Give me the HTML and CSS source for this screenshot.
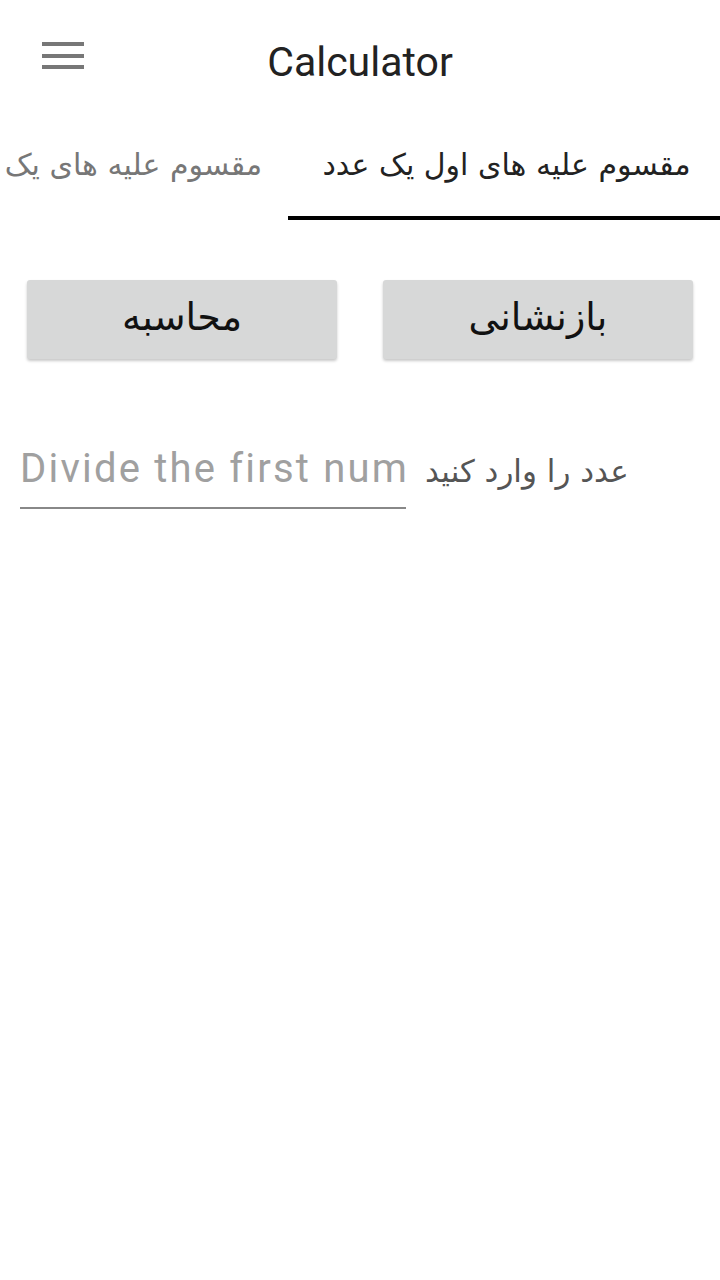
FILE: index.html
```html
<!DOCTYPE html>
<html lang="fa">
<head>
    <meta charset="UTF-8">
    <meta name="viewport" content="width=device-width, initial-scale=1.0">
    <title>Calculator</title>
    <link rel="stylesheet" href="styles.css">
</head>
<body>

    <!-- Toolbar -->
    <div class="toolbar">
        <button class="menu-btn" aria-label="menu">
            <span></span><span></span><span></span>
        </button>
        <h1 class="title">Calculator</h1>
    </div>

    <!-- Tabs -->
    <div class="tabs">
        <div class="tab active">مقسوم علیه های اول یک عدد</div>
        <div class="tab">مقسوم علیه های یک</div>
    </div>

    <div class="content">
        <div class="buttons">
            <button class="btn">محاسبه</button>
            <button class="btn">بازنشانی</button>
        </div>

        <div class="input-row">
            <input type="text" class="field" placeholder="Divide the first num">
            <label class="field-label">عدد را وارد کنید</label>
        </div>
    </div>

</body>
</html>
```

FILE: styles.css
```css
body {
    margin: 0;
    padding: 0;
    background: #fff;
    font-family: Roboto, "DejaVu Sans", sans-serif;
    color: #222;
    width: 720px;
    overflow: hidden;
}

.toolbar {
    height: 112px;
    display: flex;
    align-items: flex-start;
    position: relative;
}

.menu-btn {
    margin: 42px 0 0 42px;
    padding: 0;
    border: none;
    background: none;
    width: 42px;
    height: 27px;
    display: flex;
    flex-direction: column;
    justify-content: space-between;
}

.menu-btn span {
    display: block;
    height: 4px;
    background: #777;
}

.title {
    font-weight: normal;
    font-size: 41px;
    margin: 0;
    position: absolute;
    left: 0;
    right: 0;
    top: 38px;
    text-align: center;
    color: #222;
}

.tabs {
    direction: rtl;
    display: flex;
    height: 108px;
    overflow: hidden;
}

.tab {
    flex-shrink: 0;
    width: 432px;
    box-sizing: border-box;
    display: flex;
    align-items: center;
    justify-content: center;
    padding: 0 27px 0 32px;
    font-family: "DejaVu Sans", sans-serif;
    font-size: 30px;
    color: #777;
    white-space: nowrap;
    border-bottom: 4px solid transparent;
}

.tab + .tab {
    justify-content: flex-start;
    padding-right: 26px;
}

.tab.active {
    color: #222;
    border-bottom-color: #000;
}

.content {
    padding: 60px 27px 0 20px;
}

.buttons {
    display: flex;
    gap: 46px;
    padding-left: 7px;
}

.btn {
    flex: 1;
    height: 79px;
    border: none;
    border-radius: 3px;
    background: #d7d8d8;
    box-shadow: 0 2px 3px rgba(0, 0, 0, 0.22);
    font-size: 38px;
    color: #111;
    font-family: "DejaVu Sans", sans-serif;
    padding: 0 0 6px;
}

.input-row {
    display: flex;
    align-items: baseline;
    margin-top: 86px;
    gap: 19px;
}

.field {
    width: 386px;
    box-sizing: border-box;
    border: none;
    border-bottom: 2px solid #888;
    font-family: Roboto, sans-serif;
    font-size: 40px;
    letter-spacing: 2.2px;
    padding: 0 0 15px;
    outline: none;
    color: #222;
}

.field::placeholder {
    color: #a0a0a0;
}

.field-label {
    font-family: "DejaVu Sans", sans-serif;
    font-size: 31px;
    color: #555;
}
```
